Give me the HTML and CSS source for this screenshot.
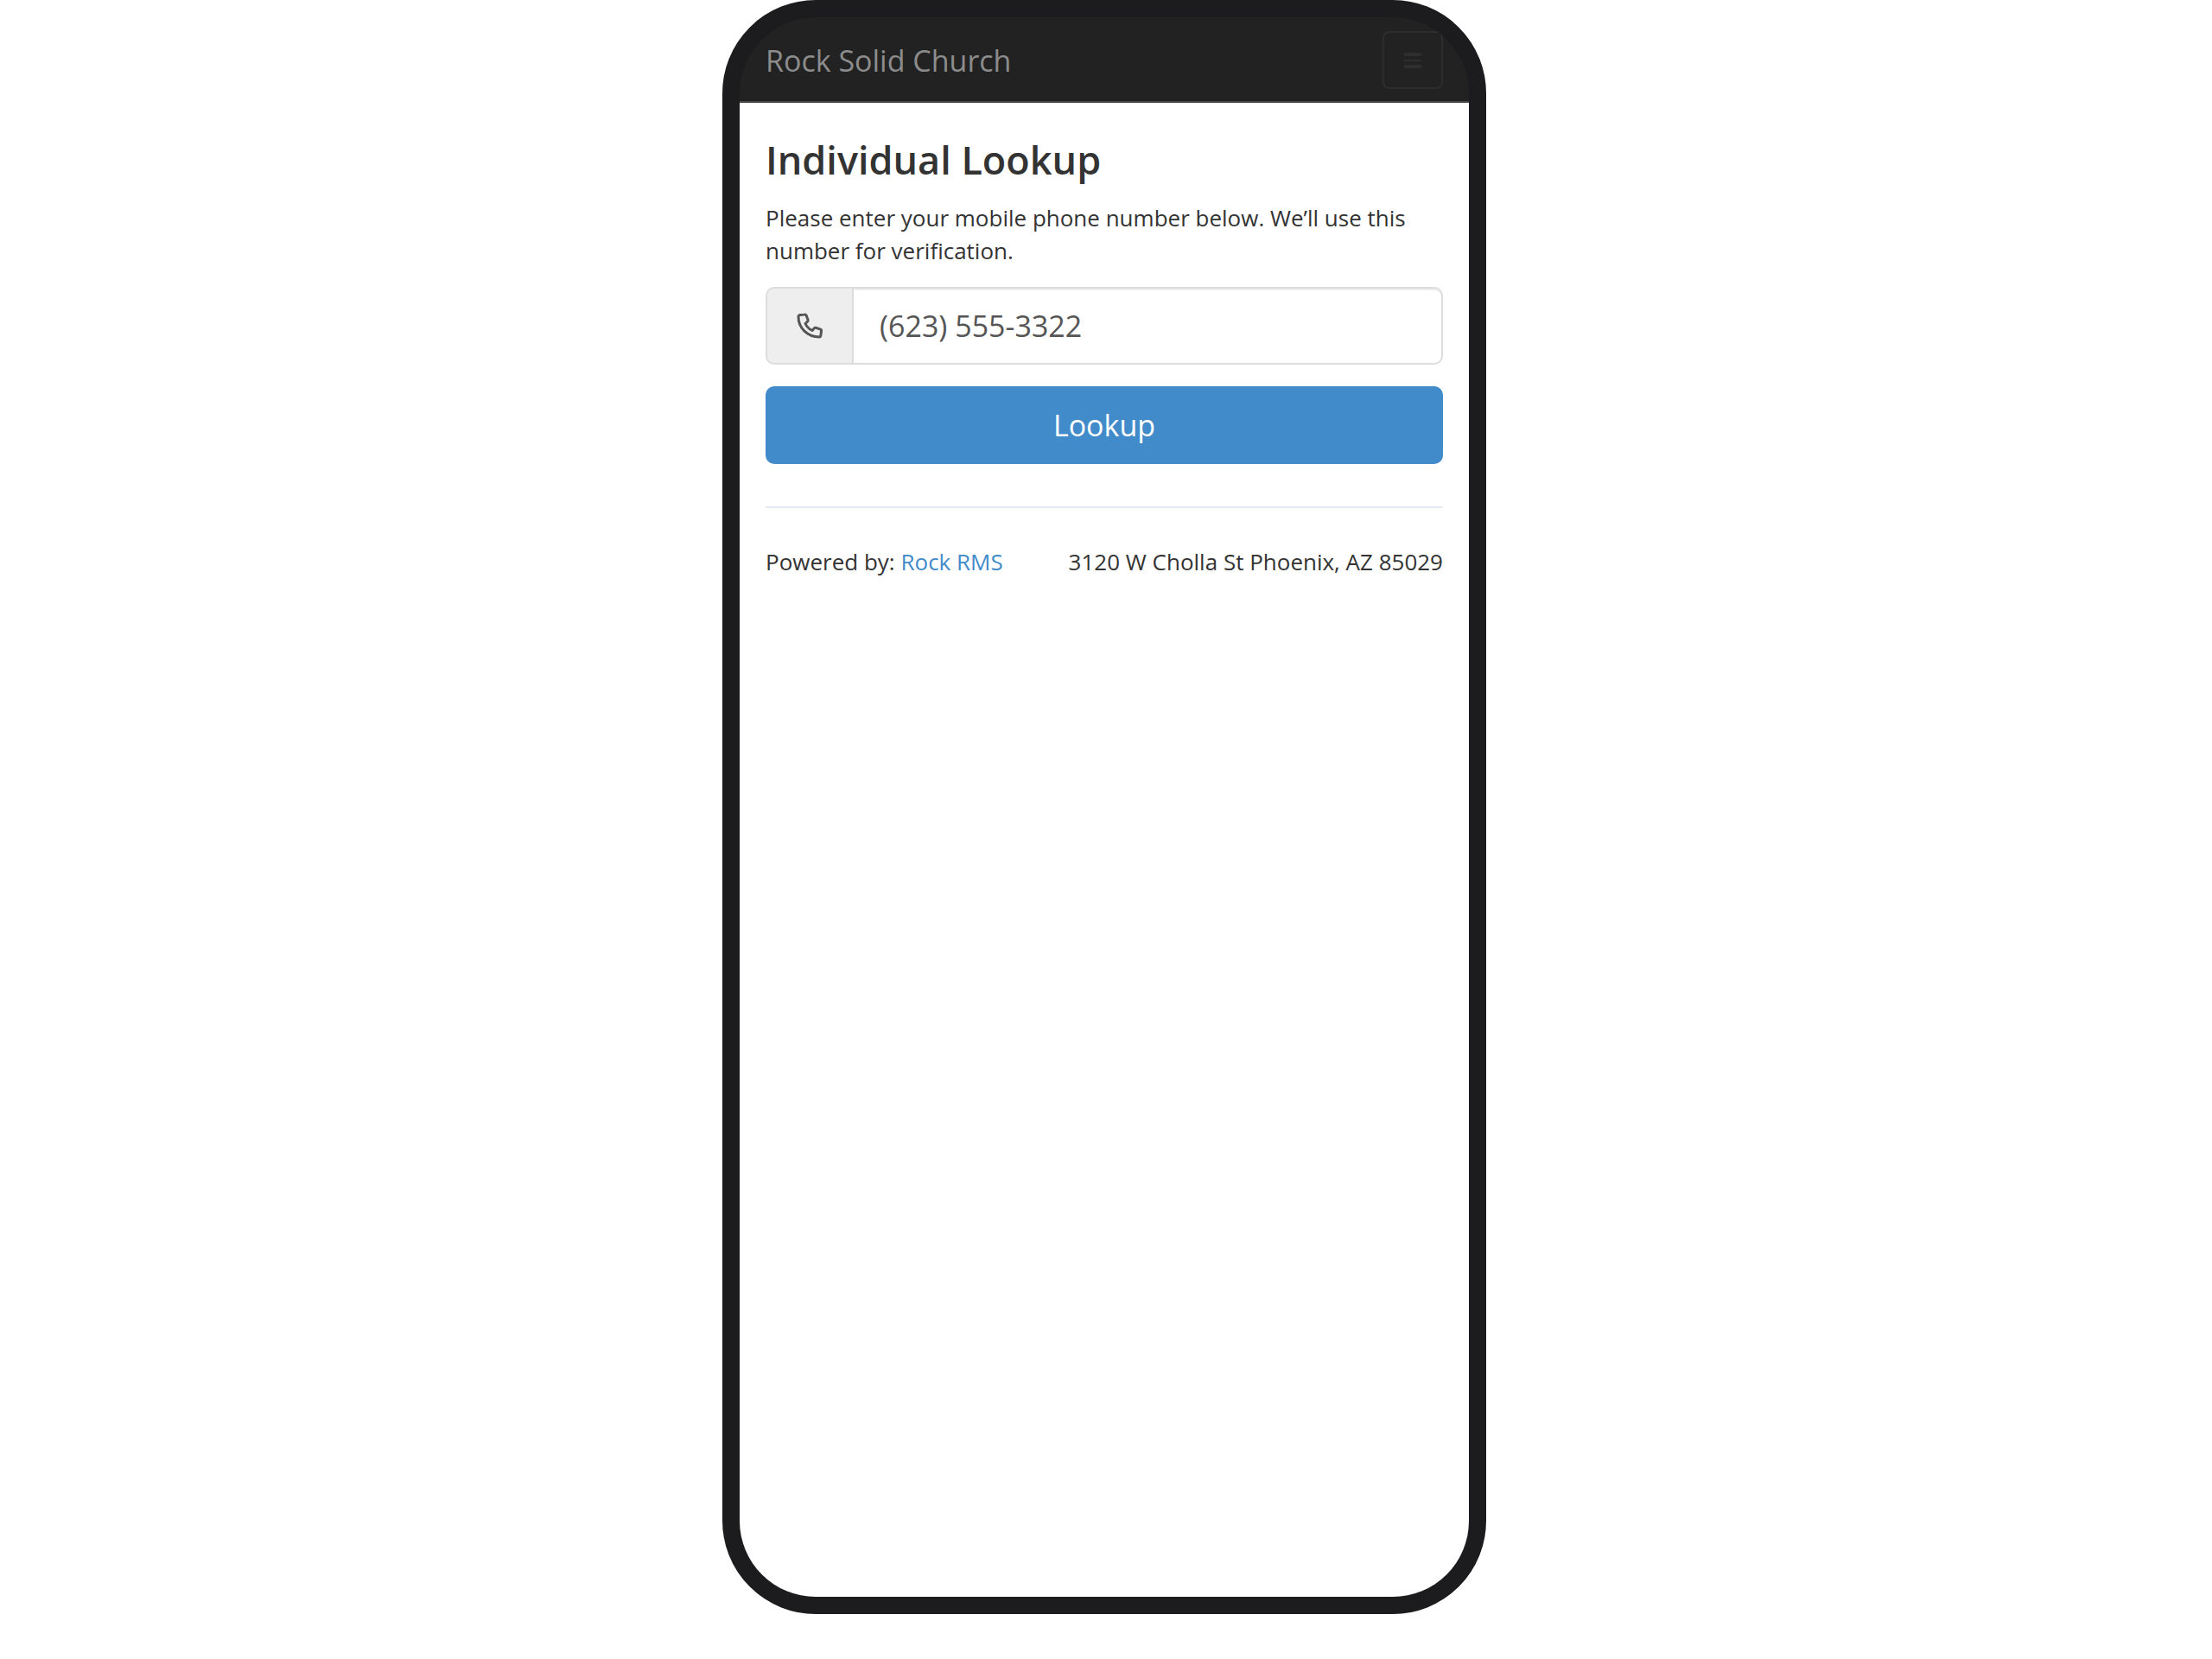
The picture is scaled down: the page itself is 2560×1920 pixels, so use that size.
FILE: index.html
```html
<!DOCTYPE html>
<html lang="en">

<head>
    <meta charset="utf-8">
    <title>Individual Lookup</title>
    <meta name="viewport" content="width=device-width, initial-scale=1">
    <link rel="stylesheet" href="styles.css">
</head>

<body>
    <div class="phone">
        <header class="navbar">
            <a class="navbar-brand" href="#">Rock Solid Church</a>
            <button class="navbar-toggle" type="button" aria-label="Toggle navigation">
                <svg class="bars" viewBox="0 0 20 18" aria-hidden="true">
                    <path d="M0 0h20v4H0zM0 8h20v2H0zM0 14h20v4H0z" />
                </svg>
            </button>
        </header>

        <main class="content">
            <h1>Individual Lookup</h1>
            <form>
                <label class="help" for="phone">Please enter your mobile phone number below. We’ll use this number for verification.</label>
                <div class="input-group">
                    <span class="input-addon">
                        <svg class="phone-icon" viewBox="0 0 30 30" aria-hidden="true">
                            <path d="M4 2.500L9 2q1.600-.2 2.200 1.200l1.800 4.800q.4 1.300-.5 2.200L10 12.500q2.500 5.500 8 8l2.500-2.700q.8-.9 2-.5l5 1.900q1.200.5 1.100 1.800l-.8 5.500q-.2 1.500-1.800 1.500C12.500 28 2 17.500 2 4.800Q2 2.800 4 2.500z" />
                        </svg>
                    </span>
                    <input class="form-control" type="tel" id="phone" value="(623) 555-3322">
                </div>
                <button class="btn" type="button">Lookup</button>
            </form>

            <footer>
                <div>Powered by: <a href="#">Rock RMS</a></div>
                <div>3120 W Cholla St Phoenix, AZ 85029</div>
            </footer>
        </main>
    </div>
</body>

</html>
```
FILE: styles.css
```css
* {
    box-sizing: border-box;
}

body {
    margin: 0;
    padding: 0 4px 52px 0;
    background: white;
    font-family: "Open Sans", "Noto Sans", sans-serif;
    font-size: 26px;
    line-height: 38px;
    color: #333;
}

a {
    color: #428bca;
    text-decoration: none;
}

/* Device frame */
.phone {
    display: flex;
    flex-direction: column;
    max-width: 884px;
    min-height: calc(100vh - 52px);
    margin: 0 auto;
    background: #1c1c1e;
    border: 20px solid #1c1c1e;
    border-radius: 108px;
    overflow: hidden;
}

/* Navbar */
.navbar {
    display: flex;
    justify-content: space-between;
    align-items: center;
    padding: 16px 30px 14px;
    background: #222;
    border-bottom: 2px solid #4a4748;
}

.navbar-brand {
    font-size: 34px;
    line-height: 48px;
    color: #8c8c8c;
}

.navbar-toggle {
    display: flex;
    justify-content: center;
    align-items: center;
    width: 70px;
    height: 67px;
    padding: 0;
    background: transparent;
    border: 2px solid #2d2d2d;
    border-radius: 8px;
}

.bars {
    width: 20px;
    height: 18px;
    fill: #2e2e2e;
}

/* Lookup form */
.content {
    flex: 1;
    padding: 38px 30px;
    background: white;
}

h1 {
    margin: 0 0 20px;
    font-size: 45px;
    font-weight: 600;
    line-height: 56px;
}

.help {
    display: block;
    margin-bottom: 23px;
}

.input-group {
    display: flex;
    height: 90px;
    margin-bottom: 25px;
}

.input-addon {
    display: flex;
    justify-content: center;
    align-items: center;
    width: 100px;
    background: #eee;
    border: 2px solid #ddd;
    border-radius: 10px 0 0 10px;
    border-right: 0;
}

.phone-icon {
    width: 30px;
    height: 30px;
    fill: none;
    stroke: #555;
    stroke-width: 3;
    stroke-linejoin: round;
}

.form-control {
    flex: 1;
    min-width: 0;
    padding: 0 30px;
    font: inherit;
    font-size: 34px;
    color: #555;
    background: white;
    border: 2px solid #ddd;
    border-radius: 0 10px 10px 0;
    box-shadow: inset 0 2px 1px rgba(0, 0, 0, 0.075);
}

.btn {
    width: 100%;
    height: 90px;
    font: inherit;
    font-size: 34px;
    color: white;
    background: #428bca;
    border: 0;
    border-radius: 10px;
}

footer {
    display: flex;
    justify-content: space-between;
    margin-top: 49px;
    padding-top: 43px;
    border-top: 2px solid #e4eaf0;
}
```
